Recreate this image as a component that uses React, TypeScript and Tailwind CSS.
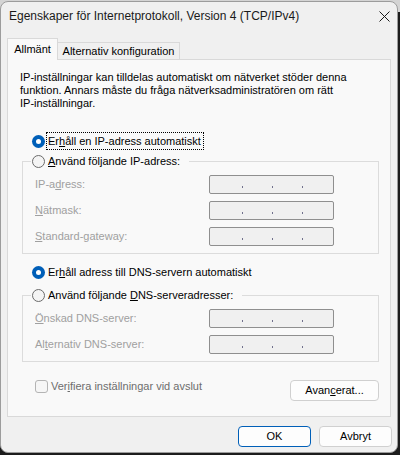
function Radio({ checked }: { checked?: boolean }) {
  if (checked) {
    return (
      <span className="flex h-[13px] w-[13px] shrink-0 items-center justify-center rounded-full bg-[#005fb8]">
        <span className="h-[5px] w-[5px] rounded-full bg-white" />
      </span>
    );
  }
  return <span className="h-[13px] w-[13px] shrink-0 rounded-full border border-[#6b6b6b] bg-[#f4f4f4]" />;
}

function IpBox() {
  return (
    <div className="flex h-[19px] w-[125px] gap-[29px] rounded-[2px] border border-[#8f8f8f] bg-[#f0f0f0] pl-[32px] pt-[10px]">
      <span className="h-[2px] w-px bg-[#70708c]" />
      <span className="h-[2px] w-px bg-[#70708c]" />
      <span className="h-[2px] w-px bg-[#70708c]" />
    </div>
  );
}

function Row({ label }: { label: React.ReactNode }) {
  return (
    <div className="ml-[4px] grid grid-cols-[174px_125px] items-center">
      <span className="text-[#a0a0a0]">{label}</span>
      <IpBox />
    </div>
  );
}

export default function App() {
  return (
    <div className="h-[455px] w-[400px] bg-[linear-gradient(to_bottom,#d4d4d4_0px,#d4d4d4_12px,#1c1c1c_12px)] pt-px font-['Liberation_Sans',Arial,sans-serif] text-[11px] leading-[13px] text-black">
      <div className="flex h-[452px] w-[398px] flex-col overflow-hidden rounded-[8px] border border-[#9c9c9c] bg-[#f0f0f0]">
        {/* Title bar */}
        <div className="flex h-[28px] shrink-0 items-center justify-between pl-[8px] pr-[7px]">
          <span className="text-[12px] leading-[14px] text-[#1a1a1a]">
            Egenskaper för Internetprotokoll, Version 4 (TCP/IPv4)
          </span>
          <svg width="11" height="11" viewBox="0 0 11 11" className="text-[#1a1a1a]">
            <path d="M0.5 0.5 L10.5 10.5 M10.5 0.5 L0.5 10.5" stroke="currentColor" strokeWidth="1" />
          </svg>
        </div>

        {/* Tabs */}
        <div className="relative z-10 mt-[7px] flex h-[22px] items-end whitespace-nowrap pl-[6px]">
          <div className="-mb-px flex h-[22px] w-[51px] items-center justify-center border border-b-0 border-[#d9d9d9] bg-[#f9f9f9] pb-px">
            Allmänt
          </div>
          <div className="flex h-[17px] w-[122px] items-center justify-center border border-b-0 border-l-0 border-[#d9d9d9] bg-[#f0f0f0] pt-px">
            Alternativ konfiguration
          </div>
        </div>

        {/* Panel */}
        <div className="ml-[6px] flex h-[358px] w-[384px] flex-col border border-[#d9d9d9] bg-[#f9f9f9]">
          <p className="whitespace-nowrap pl-[12px] pt-[11px]">
            IP-inställningar kan tilldelas automatiskt om nätverket stöder denna
            <br />
            funktion. Annars måste du fråga nätverksadministratören om rätt
            <br />
            IP-inställningar.
          </p>

          <div className="mt-[21px] flex h-[20px] items-center pl-[24px]">
            <Radio checked />
            <span className="ml-[1px] flex h-[18px] items-center border border-dotted border-black pl-px pr-[2px]">
              Er<u>h</u>åll en IP-adress automatiskt
            </span>
          </div>

          <fieldset className="ml-[14px] w-[357px] border border-[#dcdcdc] pb-[7px] pl-[8px]">
            <legend className="pl-px pr-[9px]">
              <span className="flex h-[20px] items-center gap-[3px]">
                <Radio />
                <span>
                  <u>A</u>nvänd följande IP-adress:
                </span>
              </span>
            </legend>
            <div className="mt-[4px] flex flex-col gap-[7px]">
              <Row label={<>IP-a<u>d</u>ress:</>} />
              <Row label={<><u>N</u>ätmask:</>} />
              <Row label={<><u>S</u>tandard-gateway:</>} />
            </div>
          </fieldset>

          <div className="mt-[8px] flex h-[20px] items-center gap-[3px] pl-[24px]">
            <Radio checked />
            <span>
              Er<u>h</u>åll adress till DNS-servern automatiskt
            </span>
          </div>

          <fieldset className="ml-[14px] mt-[3px] w-[357px] border border-[#dcdcdc] pb-[7px] pl-[8px]">
            <legend className="pl-px pr-[9px]">
              <span className="flex h-[20px] items-center gap-[3px]">
                <Radio />
                <span>
                  Använd följande <u>D</u>NS-serveradresser:
                </span>
              </span>
            </legend>
            <div className="mt-[4px] flex flex-col gap-[7px]">
              <Row label={<><u>Ö</u>nskad DNS-server:</>} />
              <Row label={<>Al<u>t</u>ernativ DNS-server:</>} />
            </div>
          </fieldset>

          <div className="mt-[18px] flex items-start justify-between pl-[27px] pr-[11px]">
            <div className="flex h-[13px] items-center gap-[3px]">
              <span className="h-[13px] w-[13px] rounded-[3px] border border-[#b4b4b4] bg-[#f6f6f6]" />
              <span className="text-[#6d6d6d]">
                Ver<u>i</u>fiera inställningar vid avslut
              </span>
            </div>
            <button className="flex h-[21px] w-[89px] items-center justify-center rounded-[4px] border border-[#d0d0d0] bg-[#fdfdfd]">
              Avan<u>c</u>erat...
            </button>
          </div>
        </div>

        {/* Footer */}
        <div className="mt-[9px] flex justify-end gap-[8px] pr-[5px]">
          <button className="flex h-[21px] w-[73px] items-center justify-center rounded-[4px] border border-[#005fb8] bg-[#fdfdfd]">
            OK
          </button>
          <button className="flex h-[21px] w-[73px] items-center justify-center rounded-[4px] border border-[#d0d0d0] bg-[#fdfdfd]">
            Avbryt
          </button>
        </div>
      </div>
    </div>
  );
}
